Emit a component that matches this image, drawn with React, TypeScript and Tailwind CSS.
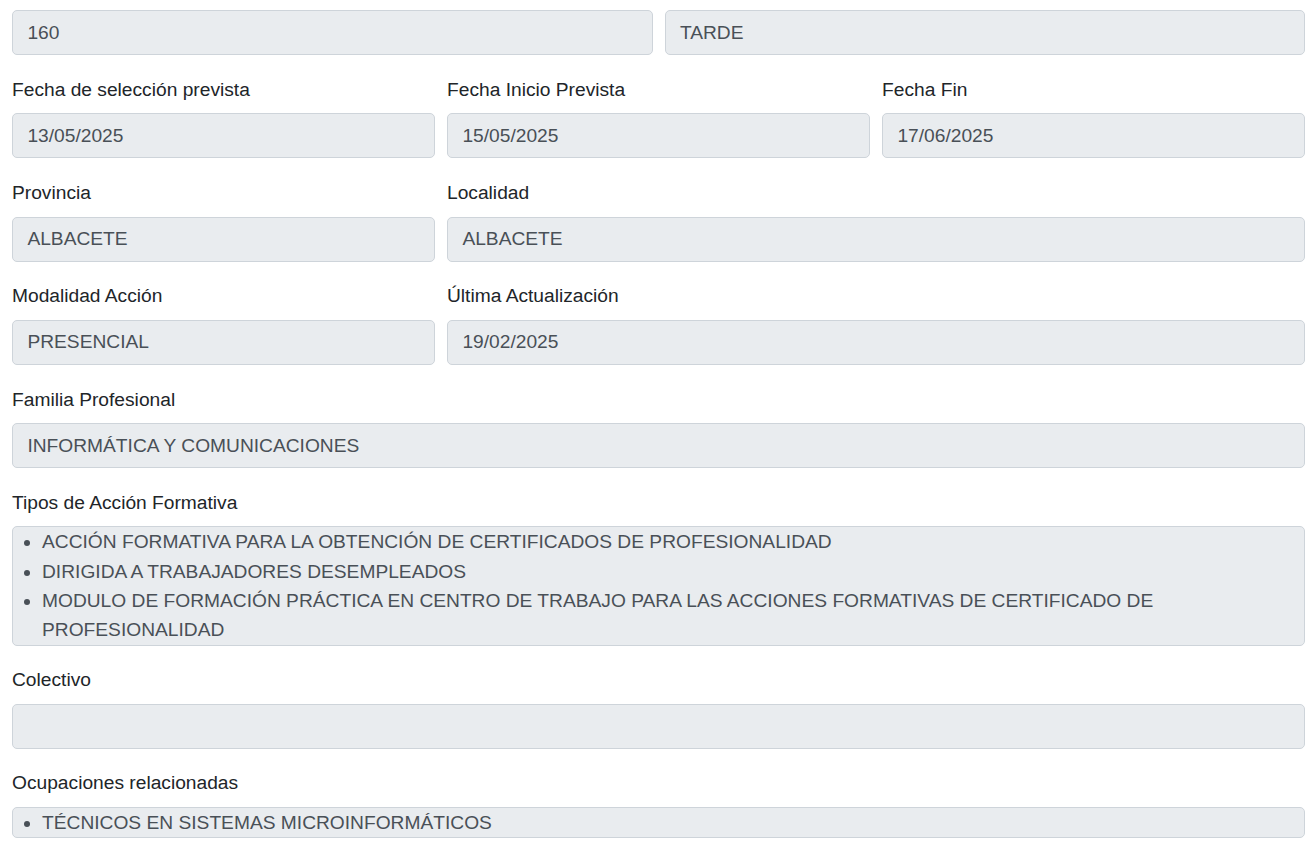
import React from 'react';

const font = { fontFamily: '"Liberation Sans", Arial, sans-serif' };

function Field({ label, value, className = '' }: { label?: string; value: string; className?: string }) {
    return (
        <div className={`pl-3 ${className}`}>
            {label && <label className="mb-[8.6px] block leading-[28.8px] text-[#212529]">{label}</label>}
            <div className="mb-[20.7px] flex h-[45.2px] items-center rounded-[5px] border border-[#ced4da] bg-[#e9ecef] px-[14.4px] pt-[1px] text-[#495057]">
                {value}
            </div>
        </div>
    );
}

function ListField({ label, items }: { label: string; items: string[] }) {
    return (
        <div className="pl-3">
            <label className="mb-[8.6px] block leading-[28.8px] text-[#212529]">{label}</label>
            <div className="mb-[20.7px] rounded-[5px] border border-[#ced4da] bg-[#e9ecef] text-[#495057]">
                <ul className="list-disc pl-[29px] leading-[29.3px]">
                    {items.map((it) => (
                        <li key={it}>{it}</li>
                    ))}
                </ul>
            </div>
        </div>
    );
}

export default function App() {
    return (
        <div className="min-h-screen bg-white pt-[10px] text-[19.2px]" style={font}>
            <div className="grid grid-cols-2">
                <Field value="160" />
                <Field value="TARDE" />
            </div>
            <div className="grid grid-cols-3">
                <Field label="Fecha de selección prevista" value="13/05/2025" />
                <Field label="Fecha Inicio Prevista" value="15/05/2025" />
                <Field label="Fecha Fin" value="17/06/2025" />
                <Field label="Provincia" value="ALBACETE" />
                <Field label="Localidad" value="ALBACETE" className="col-span-2" />
                <Field label="Modalidad Acción" value="PRESENCIAL" />
                <Field label="Última Actualización" value="19/02/2025" className="col-span-2" />
            </div>
            <Field label="Familia Profesional" value="INFORMÁTICA Y COMUNICACIONES" />
            <ListField
                label="Tipos de Acción Formativa"
                items={[
                    'ACCIÓN FORMATIVA PARA LA OBTENCIÓN DE CERTIFICADOS DE PROFESIONALIDAD',
                    'DIRIGIDA A TRABAJADORES DESEMPLEADOS',
                    'MODULO DE FORMACIÓN PRÁCTICA EN CENTRO DE TRABAJO PARA LAS ACCIONES FORMATIVAS DE CERTIFICADO DE PROFESIONALIDAD',
                ]}
            />
            <Field label="Colectivo" value="" />
            <ListField label="Ocupaciones relacionadas" items={['TÉCNICOS EN SISTEMAS MICROINFORMÁTICOS']} />
        </div>
    );
}
